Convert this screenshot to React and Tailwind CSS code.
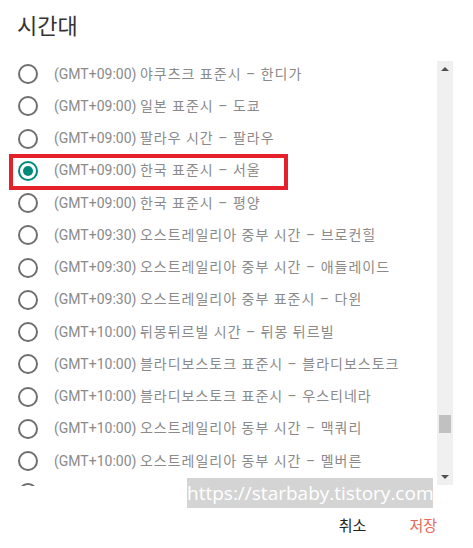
import React from "react";

const zones = [
  ["(GMT+09:00)", "야쿠츠크 표준시 – 한디가"],
  ["(GMT+09:00)", "일본 표준시 – 도쿄"],
  ["(GMT+09:00)", "팔라우 시간 – 팔라우"],
  ["(GMT+09:00)", "한국 표준시 – 서울"],
  ["(GMT+09:00)", "한국 표준시 – 평양"],
  ["(GMT+09:30)", "오스트레일리아 중부 시간 – 브로컨힐"],
  ["(GMT+09:30)", "오스트레일리아 중부 시간 – 애들레이드"],
  ["(GMT+09:30)", "오스트레일리아 중부 표준시 – 다윈"],
  ["(GMT+10:00)", "뒤몽뒤르빌 시간 – 뒤몽 뒤르빌"],
  ["(GMT+10:00)", "블라디보스토크 표준시 – 블라디보스토크"],
  ["(GMT+10:00)", "블라디보스토크 표준시 – 우스티네라"],
  ["(GMT+10:00)", "오스트레일리아 동부 시간 – 맥쿼리"],
  ["(GMT+10:00)", "오스트레일리아 동부 시간 – 멜버른"],
  ["(GMT+10:00)", "오스트레일리아 동부 시간 – 시드니"],
];

const selected = 3;

const Radio = ({ checked }) =>
  checked ? (
    <span className="w-[20px] h-[20px] rounded-full border-2 border-[#00897b] flex items-center justify-center shrink-0">
      <span className="w-[10px] h-[10px] rounded-full bg-[#00897b]"></span>
    </span>
  ) : (
    <span className="w-[20px] h-[20px] rounded-full border-2 border-[#6f6f6f] shrink-0"></span>
  );

export default function App() {
  return (
    <div
      className="relative w-[473px] h-[548px] bg-white overflow-hidden"
      style={{ fontFamily: "Roboto, 'Noto Sans CJK KR', sans-serif" }}
    >
      <h2 className="pl-[17px] pt-[12px] h-[58px] text-[22px] leading-[30px] text-[#333]">시간대</h2>

      <div className="flex h-[428px]">
        <div className="flex-1 overflow-hidden">
          {zones.map(([gmt, name], i) => (
            <div key={i} className="h-[32.25px] flex items-center pl-[18px]">
              <Radio checked={i === selected} />
              <span className="ml-[16px] text-[14px] text-[#8a8a8a] whitespace-nowrap">
                {gmt} <span className="tracking-[1px]">{name}</span>
              </span>
            </div>
          ))}
        </div>

        {/* scrollbar */}
        <div className="w-[16px] mt-[3px] mb-[1px] mr-[20px] bg-[#f0f0f0] flex flex-col items-center">
          <div className="h-[16px] flex items-center justify-center">
            <span className="w-0 h-0 border-l-[4px] border-r-[4px] border-b-[4px] border-l-transparent border-r-transparent border-b-[#505050]"></span>
          </div>
          <div className="flex-1 w-full relative">
            <div className="absolute left-[2px] right-[2px] top-[338px] h-[18px] bg-[#c1c1c1]"></div>
          </div>
          <div className="h-[16px] flex items-center justify-center">
            <span className="w-0 h-0 border-l-[4px] border-r-[4px] border-t-[4px] border-l-transparent border-r-transparent border-t-[#505050]"></span>
          </div>
        </div>
      </div>

      <div className="flex justify-end items-center gap-[43px] pr-[36px] pt-[29px] text-[15px]">
        <span className="text-[#222]">취소</span>
        <span className="text-[#e8685c]">저장</span>
      </div>

      {/* highlight box */}
      <div className="absolute left-[9px] top-[154px] w-[279px] h-[36px] border-4 border-[#e4202a]"></div>

      {/* watermark */}
      <div
        className="absolute left-[187px] top-[478px] w-[246px] h-[30px] bg-[#d4d4d4] text-white text-[19px] leading-[30px] text-center whitespace-nowrap"
        style={{ fontFamily: "'Open Sans', sans-serif" }}
      >
        https://starbaby.tistory.com
      </div>
    </div>
  );
}
